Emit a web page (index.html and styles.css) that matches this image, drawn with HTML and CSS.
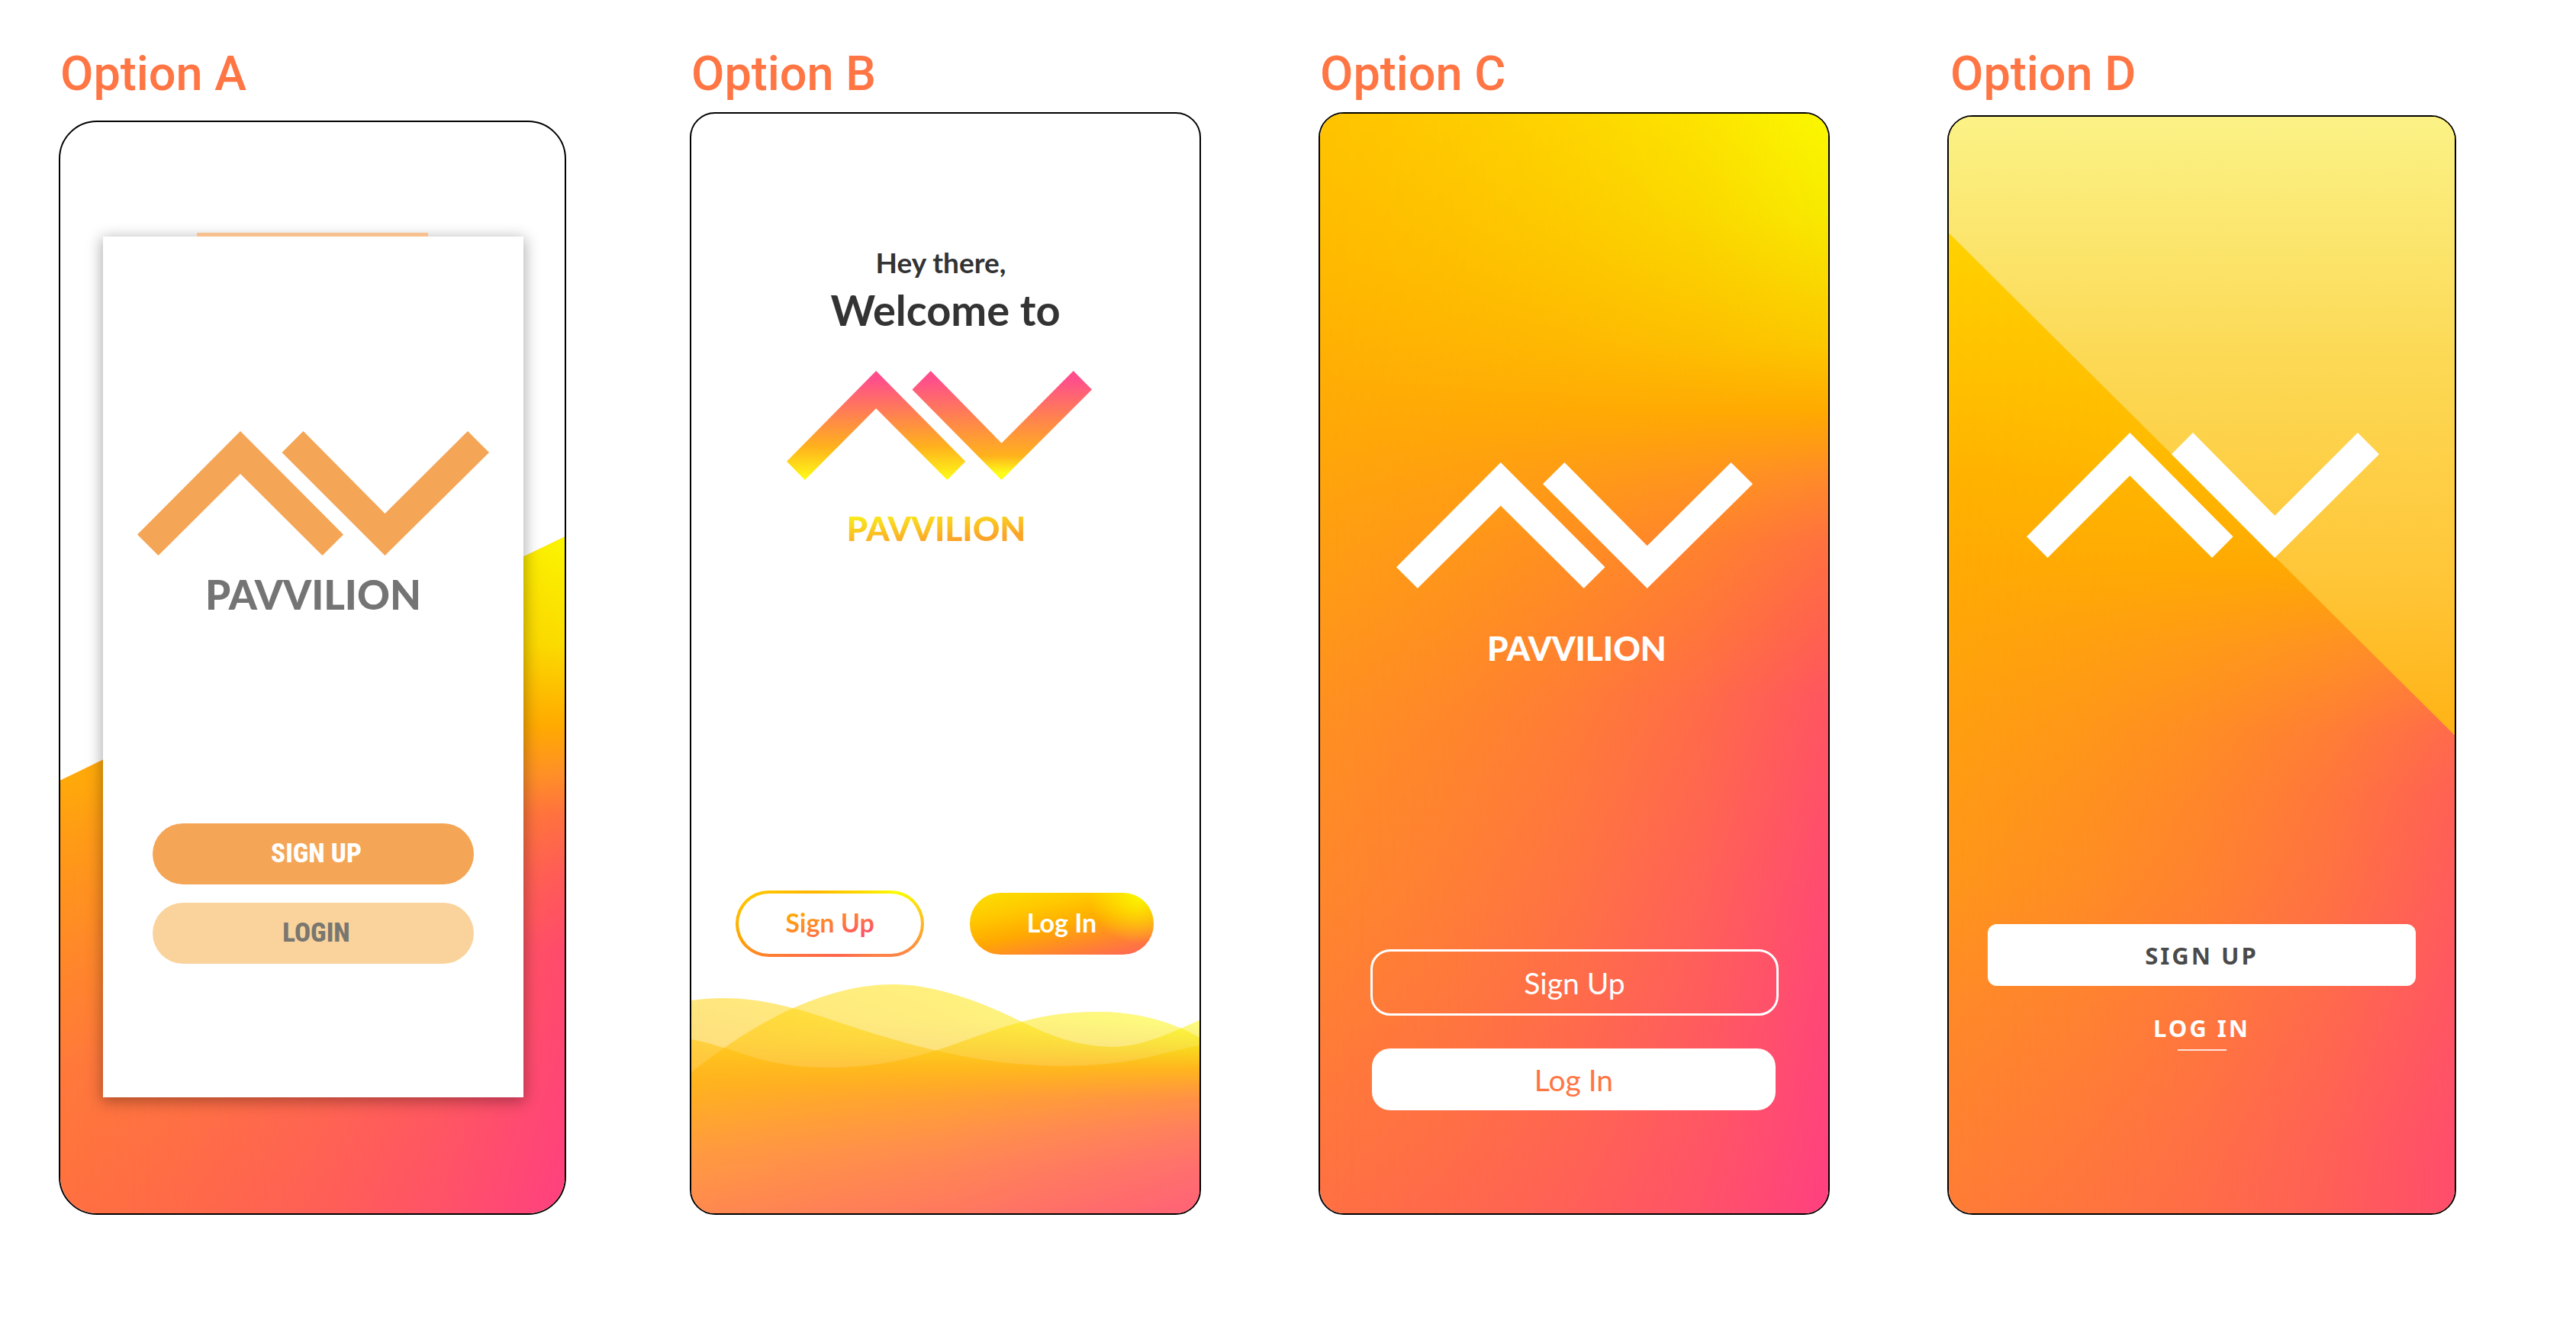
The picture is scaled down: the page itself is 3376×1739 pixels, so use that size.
FILE: index.html
```html
<!DOCTYPE html>
<html lang="en">
<head>
<meta charset="utf-8">
<meta name="viewport" content="width=device-width, initial-scale=1">
<title>Pavvilion welcome screens</title>
<link rel="stylesheet" href="styles.css">
</head>
<body>
<svg class="defs" aria-hidden="true">
  <defs>
    <symbol id="mark" viewBox="0 0 461 163" preserveAspectRatio="none">
      <path d="M0 135.500L135 0L270 135.500L242.500 163L135 56L27.500 163Z"/>
      <path d="M189.500 28L217.500 0L324.500 108L433 0L461 28L324.500 163Z"/>
    </symbol>
  </defs>
</svg>
<main class="board">
  <section class="option option-a">
    <h2 class="option-title">Option A</h2>
    <div class="phone phone-a">
      <div class="field field-a"></div>
      <div class="card">
        <svg class="mark mark-a" role="img" aria-label="Pavvilion logo"><use href="#mark"/></svg>
        <p class="brand brand-a">PAVVILION</p>
        <div class="actions-a">
          <button class="btn pill-strong" type="button">SIGN UP</button>
          <button class="btn pill-soft" type="button">LOGIN</button>
        </div>
      </div>
    </div>
  </section>

  <section class="option option-b">
    <h2 class="option-title">Option B</h2>
    <div class="phone phone-b">
      <p class="hello">Hey there,</p>
      <p class="welcome">Welcome to</p>
      <div class="identity">
        <svg class="mark-b" viewBox="0 0 461 163" preserveAspectRatio="none" role="img" aria-label="Pavvilion logo">
          <defs>
            <linearGradient id="peak" x1="0" y1="0" x2="0" y2="1">
              <stop offset=".08" stop-color="#ff4f8b"/>
              <stop offset=".42" stop-color="#ff854c"/>
              <stop offset=".7" stop-color="#ffb21c"/>
              <stop offset="1" stop-color="#fdfd18"/>
            </linearGradient>
            <linearGradient id="valley" x1="0" y1="0" x2="0" y2="1">
              <stop offset=".08" stop-color="#ff4f8b"/>
              <stop offset=".45" stop-color="#ff854c"/>
              <stop offset=".78" stop-color="#ffb21c"/>
              <stop offset=".94" stop-color="#fdfd18"/>
            </linearGradient>
          </defs>
          <path fill="url(#peak)" d="M0 135.500L135 0L270 135.500L242.500 163L135 56L27.500 163Z"/>
          <path fill="url(#valley)" d="M189.500 28L217.500 0L324.500 108L433 0L461 28L324.500 163Z"/>
        </svg>
        <p class="brand brand-b"><span class="brand-glow">PAVVILION</span></p>
      </div>
      <div class="actions-b">
        <button class="btn ghost-glow" type="button"><span class="ghost-label">Sign Up</span></button>
        <button class="btn solid-glow" type="button">Log In</button>
      </div>
      <svg class="waves" viewBox="0 0 666 300" preserveAspectRatio="none" aria-hidden="true">
        <defs>
          <linearGradient id="warm" gradientUnits="userSpaceOnUse" x1="0" y1="0" x2="0" y2="300">
            <stop offset="0" stop-color="#ffd400"/>
            <stop offset=".25" stop-color="#ffc200"/>
            <stop offset=".43" stop-color="#ffaa00"/>
            <stop offset=".73" stop-color="#ff8e25"/>
            <stop offset="1" stop-color="#ff7937"/>
          </linearGradient>
          <linearGradient id="hot" gradientUnits="userSpaceOnUse" x1="0" y1="0" x2="0" y2="300">
            <stop offset=".15" stop-color="#feff00"/>
            <stop offset=".27" stop-color="#f8d800"/>
            <stop offset=".37" stop-color="#ffac00"/>
            <stop offset=".5" stop-color="#ff822e"/>
            <stop offset=".63" stop-color="#ff6e49"/>
            <stop offset=".8" stop-color="#ff5b5b"/>
            <stop offset="1" stop-color="#ff4c64"/>
          </linearGradient>
          <linearGradient id="across">
            <stop offset="0" stop-color="#000"/>
            <stop offset=".5" stop-color="#666"/>
            <stop offset="1" stop-color="#fff"/>
          </linearGradient>
          <mask id="fade" maskUnits="userSpaceOnUse" x="0" y="0" width="666" height="300">
            <rect width="666" height="300" fill="url(#across)"/>
          </mask>
          <path id="wave1" d="M0 21C90 8 160 40 231 62S390 107 484 107S610 91 666 80V300H0Z"/>
          <path id="wave2" d="M0 115C45 80 150 0 265 0C330 0 400 33 433 49C470 68 510 82 553 82C590 82 630 63 666 47V300H0Z"/>
          <path id="wave3" d="M0 72C60 83 90 109 180 109C290 109 350 72 433 49C470 39 500 36 534 36C590 36 635 52 666 70V300H0Z"/>
        </defs>
        <g opacity=".5"><use href="#wave1" fill="url(#warm)"/><use href="#wave1" fill="url(#hot)" mask="url(#fade)"/></g>
        <g opacity=".5"><use href="#wave2" fill="url(#warm)"/><use href="#wave2" fill="url(#hot)" mask="url(#fade)"/></g>
        <g opacity=".5"><use href="#wave3" fill="url(#warm)"/><use href="#wave3" fill="url(#hot)" mask="url(#fade)"/></g>
      </svg>
    </div>
  </section>

  <section class="option option-c">
    <h2 class="option-title">Option C</h2>
    <div class="phone phone-c">
      <div class="field field-c"></div>
      <svg class="mark mark-c" role="img" aria-label="Pavvilion logo"><use href="#mark"/></svg>
      <p class="brand brand-c">PAVVILION</p>
      <div class="actions-c">
        <button class="btn outline" type="button">Sign Up</button>
        <button class="btn filled" type="button">Log In</button>
      </div>
    </div>
  </section>

  <section class="option option-d">
    <h2 class="option-title">Option D</h2>
    <div class="phone phone-d">
      <div class="field field-d"></div>
      <div class="slant"></div>
      <svg class="mark mark-d" role="img" aria-label="Pavvilion logo"><use href="#mark"/></svg>
      <div class="actions-d">
        <button class="btn block" type="button">SIGN UP</button>
        <a class="text-link" href="#login">LOG IN</a>
      </div>
    </div>
  </section>
</main>
</body>
</html>
```
FILE: styles.css
```css
* {
  box-sizing: border-box;
}

body {
  margin: 0;
  background: #fff;
  font-family: Lato, "Liberation Sans", sans-serif;
}

h2,
p {
  margin: 0;
}

.defs {
  position: absolute;
  width: 0;
  height: 0;
}

.board {
  display: grid;
  grid-template-columns: 673fr 670fr 670fr 667fr;
  column-gap: 154px;
  padding: 61px 157px 147px 77px;
}

.option {
  display: flex;
  flex-direction: column;
  gap: 14px;
}

.option-a {
  gap: 25px;
  margin-right: 8px;
}

.option-d {
  gap: 18px;
}

.option-title {
  padding-left: 2px;
  font: 500 63px/72px Roboto, "Liberation Sans", sans-serif;
  color: #ff7543;
}

.option-d .option-title {
  padding-left: 4px;
}

.phone {
  position: relative;
  isolation: isolate;
  display: flex;
  flex: 1;
  flex-direction: column;
  overflow: hidden;
  border: 2px solid #000;
  border-radius: 33px;
  background: #fff;
}

/* Two vertical ramps, the hotter one fading in toward the right edge */
.field {
  position: absolute;
  inset: 0;
  z-index: -1;
  background: var(--warm);
}

.field::after {
  content: "";
  position: absolute;
  inset: 0;
  background: var(--hot);
  mask-image: linear-gradient(to right, transparent, rgba(0, 0, 0, 0.14) 25%, rgba(0, 0, 0, 0.34) 50%, rgba(0, 0, 0, 0.62) 75%, #000);
}

.mark {
  display: block;
  width: 100%;
}

.brand {
  font-weight: 900;
  font-size: 44px;
  line-height: 58px;
  text-align: center;
}

.btn {
  display: block;
  width: 100%;
  margin: 0;
  padding: 0;
  border: 0;
  font-family: inherit;
  text-align: center;
  cursor: pointer;
}

/* Option A */
.phone-a {
  padding: 150px 54px 152px 56px;
  border-radius: 50px;
}

.field-a {
  --warm: linear-gradient(#ffa90a 36%, #ff9d15 44%, #ff8a28 61%, #ff7a3a 78%, #ff7040);
  --hot: linear-gradient(#fbf600, #fbdc00 16%, #ffaa00 28%, #ff8f28 35%, #ff7040 41%, #ff5a58 50%, #ff4a6c 61%, #ff4080);
  top: 38%;
  clip-path: polygon(0 36%, 100% 0, 100% 100%, 0 100%);
}

.card {
  position: relative;
  padding: 255px 45px 175px;
  background: #fff;
  box-shadow: 0 4px 18px 2px rgba(0, 0, 0, 0.32);
}

.card::before {
  content: "";
  position: absolute;
  top: -5px;
  left: 123px;
  width: 55%;
  height: 5px;
  background: #f7c08c;
}

.mark-a {
  height: 163px;
  fill: #f4a556;
}

.brand-a {
  margin-top: 18px;
  font-size: 53px;
  line-height: 66px;
  color: #747474;
}

.actions-a {
  display: grid;
  gap: 24px;
  margin-top: 267px;
  padding: 0 20px;
}

.actions-a .btn {
  height: 80px;
  padding-left: 8px;
  border-radius: 40px;
  font: 800 35px/40px "Roboto Condensed", "Liberation Sans Narrow", Roboto, sans-serif;
}

.pill-strong {
  background: #f4a556;
  color: #fff;
}

.pill-soft {
  background: #fad39c;
  color: #787770;
}

/* Option B */
.phone-b {
  padding-top: 172px;
  text-align: center;
  color: #333;
}

.hello {
  padding-right: 12px;
  font-weight: 700;
  font-size: 37px;
  line-height: 46px;
}

.welcome {
  margin-top: 4px;
  font-weight: 700;
  font-size: 56px;
  line-height: 70px;
}

.identity {
  margin-top: 45px;
  padding: 0 141px 0 125px;
}

.mark-b {
  display: block;
  width: 100%;
  height: 143px;
}

.brand-b {
  margin-top: 34px;
  padding-right: 8px;
}

.brand-glow,
.ghost-label {
  background-clip: text;
  -webkit-background-clip: text;
  color: transparent;
}

.brand-glow {
  background-image: linear-gradient(175deg, #f9ee1b 14%, #fba427 74%);
}

.actions-b {
  display: grid;
  grid-template-columns: 247fr 241fr;
  gap: 60px;
  align-items: center;
  margin-top: 446px;
  padding: 0 60px 0 58px;
}

.actions-b .btn {
  padding-bottom: 3px;
  font-weight: 700;
  font-size: 34px;
  line-height: 42px;
}

.ghost-glow {
  height: 87px;
  border: 4px solid transparent;
  border-radius: 44px;
  background:
    linear-gradient(#fff, #fff) padding-box,
    radial-gradient(circle at 86% 0, #fbff00, rgba(253, 214, 0, 0) 50%) border-box,
    linear-gradient(160deg, #ffcf00, #ffa500 36%, #ff7043 66%, #ff4f6a) border-box;
}

.ghost-label {
  background-image: linear-gradient(160deg, #ffb000 10%, #ff7d38 55%, #ff4f6a 90%);
}

.solid-glow {
  height: 81px;
  border-radius: 40px;
  background:
    radial-gradient(circle at 92% 0, #fbf800, rgba(253, 214, 0, 0) 28%),
    linear-gradient(168deg, #fbe000, #ffc800 28%, #ffaa00 52%, #ff7f35 80%, #ff625a);
  color: #fff;
}

.waves {
  display: block;
  width: 100%;
  height: 300px;
  margin-top: 36px;
}

/* Option C */
.phone-c {
  padding: 457px 65px 135px 66px;
}

.field-c {
  --warm: linear-gradient(#ffc400, #ffb900 14%, #ffa808 29%, #ff8f22 56%, #ff872c 71%, #ff7043);
  --hot: linear-gradient(#fbf800, #f8ea00 9%, #fcc800 21%, #ffaa00 27%, #ff8a2a 33%, #ff7040 39%, #ff6050 47%, #ff5560 53%, #ff4a72 71%, #ff4080);
}

.mark-c {
  height: 165px;
  padding: 0 34px;
  fill: #fff;
}

.brand-c {
  margin-top: 49px;
  padding-left: 6px;
  color: #fff;
}

.actions-c {
  display: grid;
  gap: 43px;
  margin-top: 366px;
}

.actions-c .btn {
  font-weight: 400;
  font-size: 39px;
  line-height: 46px;
}

.outline {
  height: 87px;
  border: 3px solid #fff;
  border-radius: 26px;
  background: transparent;
  color: #fff;
}

.actions-c .filled {
  width: auto;
  height: 81px;
  margin: 0 4px 0 2px;
  border-radius: 24px;
  background: #fff;
  color: #ff7543;
}

/* Option D */
.phone-d {
  padding: 414px 51px 213px;
}

.field-d {
  --warm: linear-gradient(#ffd200 11%, #ffc000 24%, #ffb200 33%, #ffa608 46%, #ff9a15 63%, #ff961a 70%, #ff8a28 81%, #ff7c36);
  --hot: linear-gradient(#ffc800 30%, #ffa800 41%, #ff8830 48%, #ff6a4c 56%, #ff6055 62%, #ff5860 76%, #ff4d6c 94%);
}

.slant {
  position: absolute;
  inset: 0;
  z-index: -1;
  background: linear-gradient(#fbf286, #fcd955 22%, #ffc638 42%, #ffb316 56%);
  clip-path: polygon(0 10.6%, 0 0, 100% 0, 100% 56.4%);
}

.mark-d {
  height: 164px;
  padding: 0 48px 0 51px;
  fill: #fff;
}

.actions-d {
  display: flex;
  flex-direction: column;
  align-items: center;
  margin-top: 480px;
  font: 700 31px/44px "Noto Sans", "Open Sans", sans-serif;
  letter-spacing: 3px;
}

.block {
  height: 81px;
  border-radius: 12px;
  background: #fff;
  color: #4a4a4a;
  font: inherit;
  letter-spacing: inherit;
}

.text-link {
  display: flex;
  flex-direction: column;
  align-items: center;
  gap: 6px;
  margin-top: 33px;
  color: #fff;
  text-decoration: none;
}

.text-link::after {
  content: "";
  width: 64px;
  height: 2px;
  background: #ffe4dc;
}
```
